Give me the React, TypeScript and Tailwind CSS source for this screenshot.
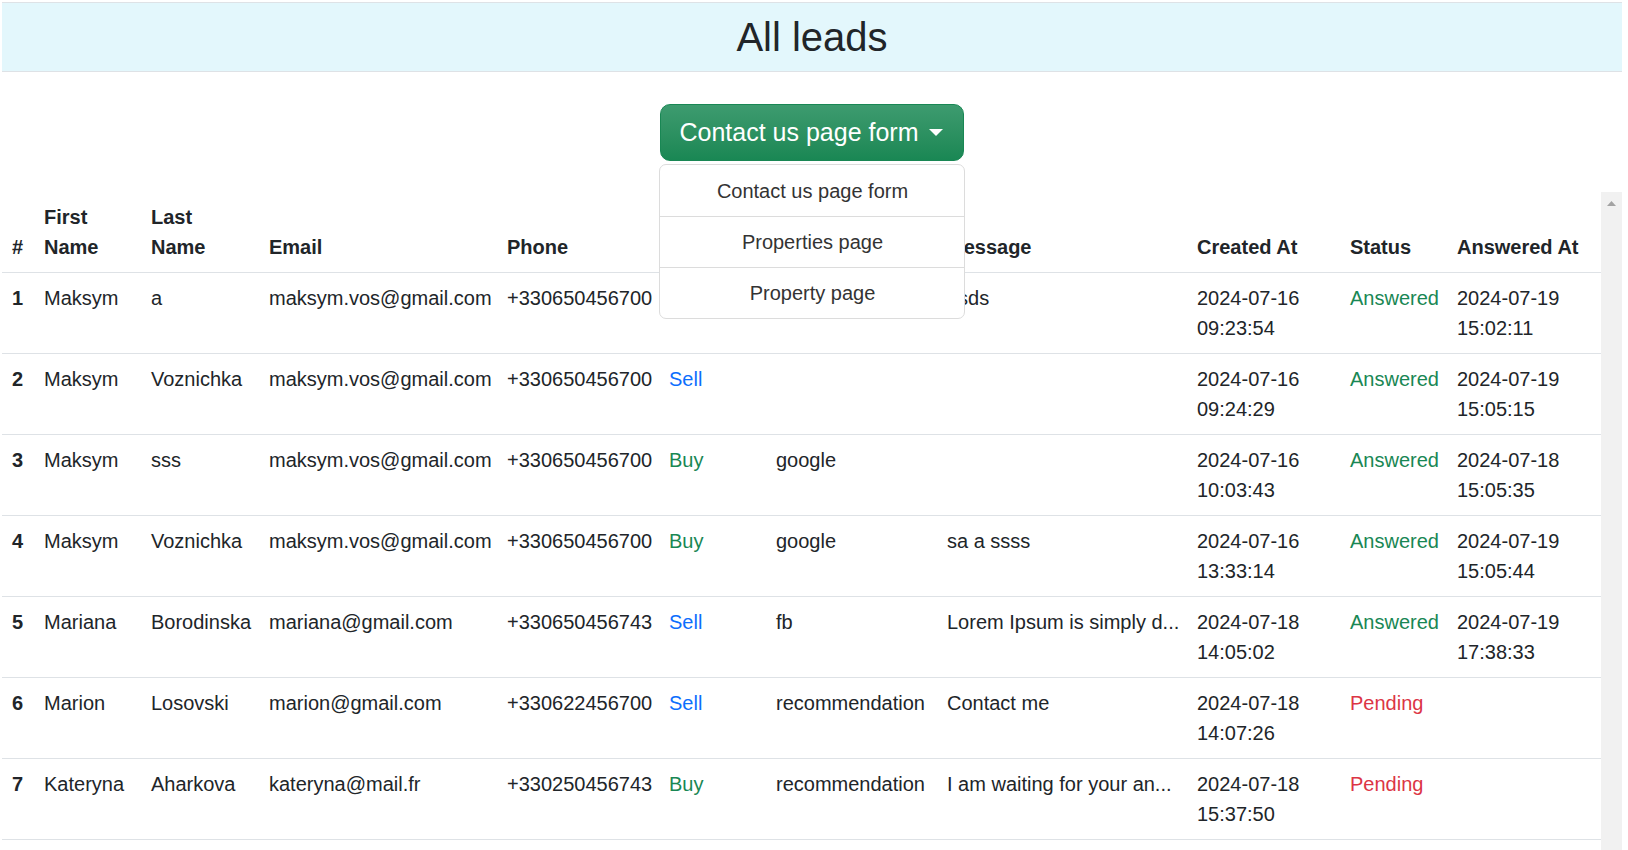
import React from "react";

type Lead = {
  id: number;
  first: string;
  last: string;
  email: string;
  phone: string;
  type: "Buy" | "Sell" | "";
  source: string;
  message: string;
  created: [string, string];
  status: "Answered" | "Pending";
  answered?: [string, string];
};

// row 1 type / source sit under the open dropdown, so they stay empty
const leads: Lead[] = [
  {
    id: 1,
    first: "Maksym",
    last: "a",
    email: "maksym.vos@gmail.com",
    phone: "+330650456700",
    type: "",
    source: "",
    message: "dsds",
    created: ["2024-07-16", "09:23:54"],
    status: "Answered",
    answered: ["2024-07-19", "15:02:11"],
  },
  {
    id: 2,
    first: "Maksym",
    last: "Voznichka",
    email: "maksym.vos@gmail.com",
    phone: "+330650456700",
    type: "Sell",
    source: "",
    message: "",
    created: ["2024-07-16", "09:24:29"],
    status: "Answered",
    answered: ["2024-07-19", "15:05:15"],
  },
  {
    id: 3,
    first: "Maksym",
    last: "sss",
    email: "maksym.vos@gmail.com",
    phone: "+330650456700",
    type: "Buy",
    source: "google",
    message: "",
    created: ["2024-07-16", "10:03:43"],
    status: "Answered",
    answered: ["2024-07-18", "15:05:35"],
  },
  {
    id: 4,
    first: "Maksym",
    last: "Voznichka",
    email: "maksym.vos@gmail.com",
    phone: "+330650456700",
    type: "Buy",
    source: "google",
    message: "sa a ssss",
    created: ["2024-07-16", "13:33:14"],
    status: "Answered",
    answered: ["2024-07-19", "15:05:44"],
  },
  {
    id: 5,
    first: "Mariana",
    last: "Borodinska",
    email: "mariana@gmail.com",
    phone: "+330650456743",
    type: "Sell",
    source: "fb",
    message: "Lorem Ipsum is simply d...",
    created: ["2024-07-18", "14:05:02"],
    status: "Answered",
    answered: ["2024-07-19", "17:38:33"],
  },
  {
    id: 6,
    first: "Marion",
    last: "Losovski",
    email: "marion@gmail.com",
    phone: "+330622456700",
    type: "Sell",
    source: "recommendation",
    message: "Contact me",
    created: ["2024-07-18", "14:07:26"],
    status: "Pending",
  },
  {
    id: 7,
    first: "Kateryna",
    last: "Aharkova",
    email: "kateryna@mail.fr",
    phone: "+330250456743",
    type: "Buy",
    source: "recommendation",
    message: "I am waiting for your an...",
    created: ["2024-07-18", "15:37:50"],
    status: "Pending",
  },
];

const forms = ["Contact us page form", "Properties page", "Property page"];

const th = "px-[10px] py-[10px] align-bottom text-left font-bold border-b border-[#dee2e6]";
const td = "px-[10px] py-[10px] align-top whitespace-nowrap border-b border-[#dee2e6]";

const App = () => {
  return (
    <div className="h-screen flex flex-col pt-[2px] pl-[2px] pr-[6px] bg-white text-[#212529] text-[20px] leading-[30px] font-['Segoe_UI','Liberation_Sans',Arial,sans-serif] overflow-hidden">
      {/* title band */}
      <header className="h-[70px] shrink-0 flex items-center justify-center bg-[#e3f7fc] border-y border-[#dee2e6]">
        <h1 className="text-[40px] leading-none font-medium">All leads</h1>
      </header>

      {/* form selector */}
      <div className="flex justify-center pt-[32px] pb-[31px] shrink-0">
        <div className="relative">
          <button className="h-[57px] pl-[18px] pr-[20px] flex items-center rounded-[10px] border border-[#198754] bg-linear-to-b from-[#3d9b6f] to-[#198754] text-white text-[25px] leading-[37px]">
            Contact us page form
            <span className="ml-[10px] w-0 h-0 border-x-[7px] border-x-transparent border-t-[7px] border-t-white" />
          </button>
          <ul className="absolute z-10 left-[-1px] top-[60px] w-[306px] bg-white border border-[#dcdcdc] rounded-[7px] overflow-hidden text-[#333] text-center">
            {forms.map((f, i) => (
              <li
                key={f}
                className={`h-[51px] flex items-center justify-center ${i > 0 ? "border-t border-[#dcdcdc]" : ""}`}
              >
                {f}
              </li>
            ))}
          </ul>
        </div>
      </div>

      {/* leads table + scroll rail */}
      <div className="flex flex-1 min-h-0">
        <div className="flex-1 min-w-0 overflow-hidden">
          <table className="w-full table-fixed border-collapse">
            <thead>
              <tr>
                <th className={`${th} w-[32px]`}>#</th>
                <th className={`${th} w-[107px]`}>
                  First
                  <br />
                  Name
                </th>
                <th className={`${th} w-[118px]`}>
                  Last
                  <br />
                  Name
                </th>
                <th className={`${th} w-[238px]`}>Email</th>
                <th className={`${th} w-[162px]`}>Phone</th>
                <th className={`${th} w-[107px]`}></th>
                <th className={`${th} w-[171px]`}></th>
                <th className={`${th} w-[250px]`}>Message</th>
                <th className={`${th} w-[153px]`}>Created At</th>
                <th className={`${th} w-[107px]`}>Status</th>
                <th className={`${th} w-[154px]`}>Answered At</th>
              </tr>
            </thead>
            <tbody>
              {leads.map((l) => (
                <tr key={l.id}>
                  <th className={`${td} text-left font-bold`}>{l.id}</th>
                  <td className={td}>{l.first}</td>
                  <td className={td}>{l.last}</td>
                  <td className={td}>{l.email}</td>
                  <td className={td}>{l.phone}</td>
                  <td className={`${td} ${l.type === "Sell" ? "text-[#0d6efd]" : "text-[#198754]"}`}>
                    {l.type}
                  </td>
                  <td className={td}>{l.source}</td>
                  <td className={td}>{l.message}</td>
                  <td className={td}>
                    <div>{l.created[0]}</div>
                    <div>{l.created[1]}</div>
                  </td>
                  <td className={`${td} ${l.status === "Answered" ? "text-[#198754]" : "text-[#dc3545]"}`}>
                    {l.status}
                  </td>
                  <td className={td}>
                    {l.answered && (
                      <>
                        <div>{l.answered[0]}</div>
                        <div>{l.answered[1]}</div>
                      </>
                    )}
                  </td>
                </tr>
              ))}
            </tbody>
          </table>
        </div>
        <div className="w-[21px] shrink-0 bg-[#f1f1f1] flex justify-center pt-[9px]">
          <svg width="9" height="5" viewBox="0 0 9 5">
            <path d="M4.5 0 L9 5 L0 5 Z" fill="#a3a3a3" />
          </svg>
        </div>
      </div>
    </div>
  );
};

export default App;
